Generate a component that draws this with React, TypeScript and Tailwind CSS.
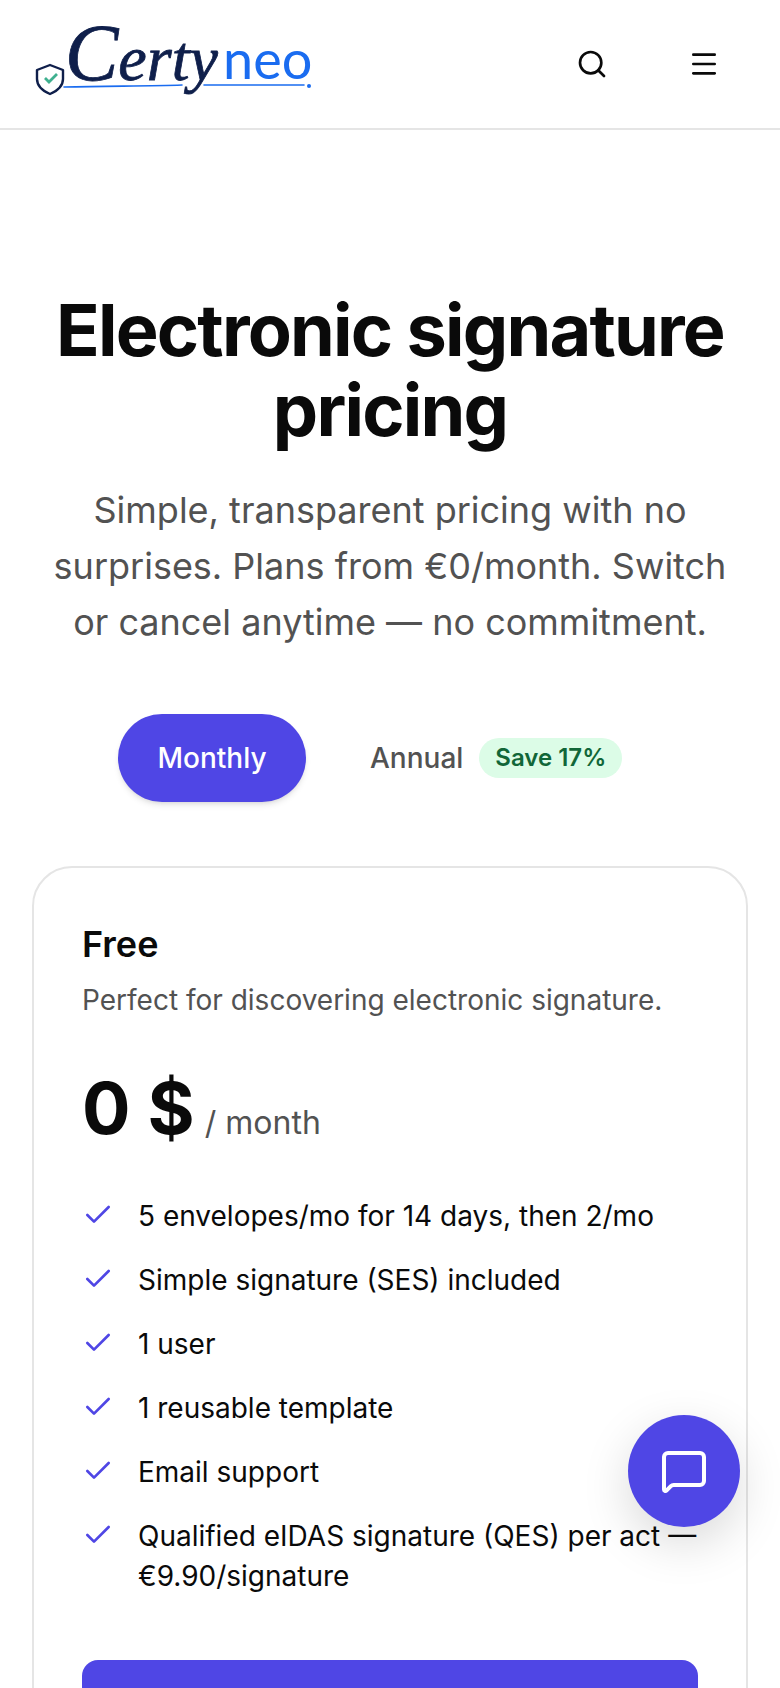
import React from 'react';
import { Check, Menu, MessageSquare, Search } from 'lucide-react';

const features = [
  '5 envelopes/mo for 14 days, then 2/mo',
  'Simple signature (SES) included',
  '1 user',
  '1 reusable template',
  'Email support',
  'Qualified eIDAS signature (QES) per act — €9.90/signature',
];

const Logo: React.FC = () => (
  <svg width="290" height="120" viewBox="0 -15 290 120" fill="none" className="block">
    {/* shield */}
    <path
      d="M18 46 L31 51 V60 C31 67 25 72 18 75 C11 72 5 67 5 60 V51 Z"
      stroke="#0f1f4b"
      strokeWidth="2.4"
      strokeLinejoin="round"
    />
    <path d="M13 59 L17 63 L25 55" stroke="#3fb08f" strokeWidth="2.8" />
    {/* wordmark */}
    <text
      x="33"
      y="61"
      fontFamily="'Liberation Serif', serif"
      fontStyle="italic"
      fill="#0f1f4b"
      stroke="#0f1f4b"
      strokeWidth="0.8"
    >
      <tspan fontSize="80">C</tspan>
      <tspan fontSize="64">erty</tspan>
    </text>
    <text x="191" y="60" fontFamily="Lato, sans-serif" fontSize="54" fill="#1a6cf0">
      neo
    </text>
    {/* underline */}
    <path d="M32 68 C80 67 120 67 150 66 M172 66 C210 66 250 66 272 66" stroke="#1a6cf0" strokeWidth="1.6" strokeLinecap="round" />
    <circle cx="277" cy="67" r="2" fill="#1a6cf0" />
  </svg>
);

const App: React.FC = () => {
  return (
    <div className="relative h-[1688px] w-full overflow-hidden bg-white text-[#0a0a0a] font-['Inter',sans-serif]">
      {/* Header */}
      <header className="flex h-[130px] items-center justify-between border-b-2 border-[#e5e5e5] pl-[32px] pr-[60px]">
        <Logo />
        <div className="flex items-center gap-[80px]">
          <Search size={32} />
          <Menu size={32} />
        </div>
      </header>

      {/* Hero */}
      <section className="px-[32px] pt-[160px] text-center">
        <h1 className="text-[72px] font-bold leading-[80px] tracking-[-1.8px]">Electronic signature pricing</h1>
        <p className="mt-[32px] text-[36px] leading-[56px] text-[#525252]">
          Simple, transparent pricing with no surprises. Plans from €0/month. Switch or cancel anytime — no commitment.
        </p>
      </section>

      {/* Billing toggle */}
      <div className="mt-[64px] flex items-center pl-[118px]">
        <button className="h-[88px] w-[188px] rounded-[44px] bg-[#4f46e5] text-[28px] font-medium text-white shadow-md">
          Monthly
        </button>
        <span className="ml-[64px] text-[28px] font-medium text-[#525252]">Annual</span>
        <span className="ml-[16px] flex h-[40px] items-center rounded-full bg-[#dcfce7] px-[16px] text-[24px] font-semibold text-[#116638]">
          Save 17%
        </span>
      </div>

      {/* Plan card */}
      <div className="mx-[32px] mt-[64px] rounded-[40px] border-2 border-[#e5e5e5] p-[48px]">
        <h2 className="text-[36px] font-semibold leading-[56px]">Free</h2>
        <p className="mt-[8px] text-[28px] leading-[40px] text-[#525252]">Perfect for discovering electronic signature.</p>
        <div className="mt-[40px] flex items-baseline gap-[10px]">
          <span className="text-[72px] font-bold leading-[96px]">0 $</span>
          <span className="text-[32px] text-[#525252]">/ month</span>
        </div>
        <ul className="mt-[40px] flex flex-col gap-[24px]">
          {features.map((feature) => (
            <li key={feature} className="flex gap-[24px] text-[28px] leading-[40px]">
              <Check size={32} className="mt-[3px] shrink-0 text-[#4f46e5]" />
              <span>{feature}</span>
            </li>
          ))}
        </ul>
        <button className="mt-[64px] h-[112px] w-full rounded-[16px] bg-[#4f46e5]" />
      </div>

      {/* Chat bubble */}
      <button className="absolute bottom-[161px] right-[40px] flex h-[112px] w-[112px] items-center justify-center rounded-full bg-[#4f46e5] text-white shadow-[0_16px_48px_rgba(0,0,0,0.15)]">
        <MessageSquare size={48} />
      </button>
    </div>
  );
};

export default App;
